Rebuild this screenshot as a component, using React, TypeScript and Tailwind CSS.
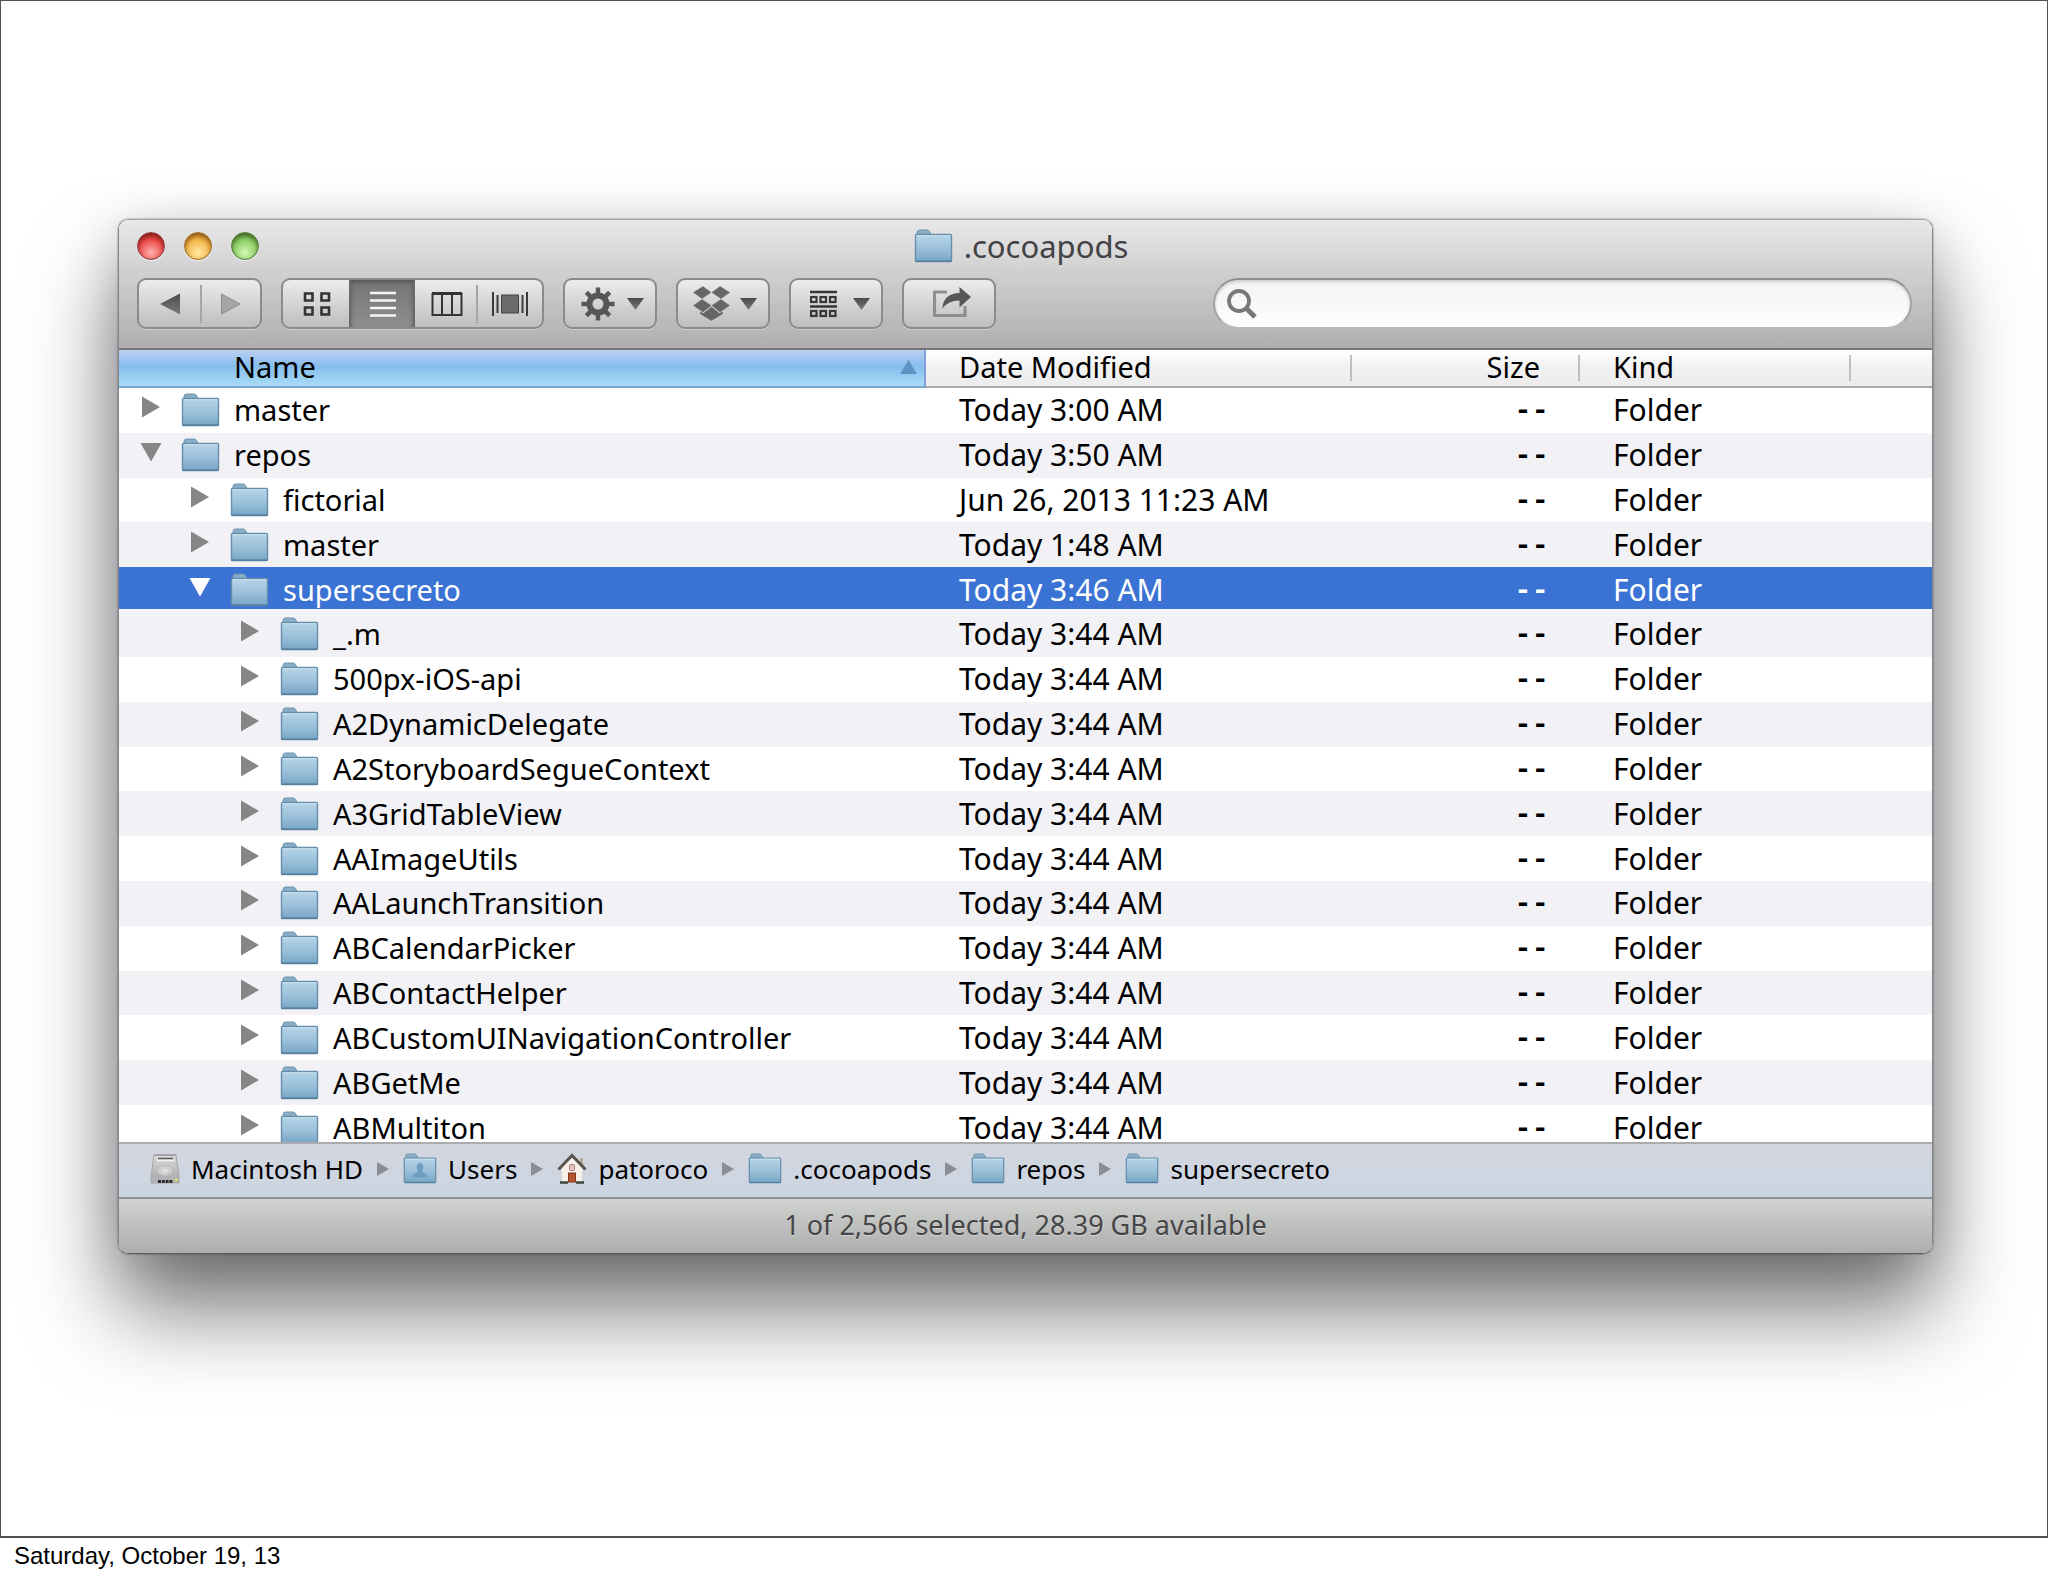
import React from "react";

type Entry = { name: string; level: 0 | 1 | 2; open?: boolean; selected?: boolean; date: string };

const LATE = "Today 3:44 AM";

const entries: Entry[] = [
  { name: "master", level: 0, date: "Today 3:00 AM" },
  { name: "repos", level: 0, open: true, date: "Today 3:50 AM" },
  { name: "fictorial", level: 1, date: "Jun 26, 2013 11:23 AM" },
  { name: "master", level: 1, date: "Today 1:48 AM" },
  { name: "supersecreto", level: 1, open: true, selected: true, date: "Today 3:46 AM" },
  { name: "_.m", level: 2, date: LATE },
  { name: "500px-iOS-api", level: 2, date: LATE },
  { name: "A2DynamicDelegate", level: 2, date: LATE },
  { name: "A2StoryboardSegueContext", level: 2, date: LATE },
  { name: "A3GridTableView", level: 2, date: LATE },
  { name: "AAImageUtils", level: 2, date: LATE },
  { name: "AALaunchTransition", level: 2, date: LATE },
  { name: "ABCalendarPicker", level: 2, date: LATE },
  { name: "ABContactHelper", level: 2, date: LATE },
  { name: "ABCustomUINavigationController", level: 2, date: LATE },
  { name: "ABGetMe", level: 2, date: LATE },
  { name: "ABMultiton", level: 2, date: LATE },
];

const indent = { 0: "pl-[21px]", 1: "pl-[70px]", 2: "pl-[120px]" };

function Gradients() {
  return (
    <svg className="absolute h-0 w-0" aria-hidden="true">
      <defs>
        <linearGradient id="folder" x1="0" y1="0" x2="0" y2="1">
          <stop offset="0" stopColor="#b5d4e8" />
          <stop offset="0.5" stopColor="#9dc1da" />
          <stop offset="1" stopColor="#77a6c6" />
        </linearGradient>
        <linearGradient id="glyph" x1="0" y1="0" x2="0" y2="1">
          <stop offset="0" stopColor="#4a4a4a" />
          <stop offset="1" stopColor="#7a7a7a" />
        </linearGradient>
        <linearGradient id="metal" x1="0" y1="0" x2="0" y2="1">
          <stop offset="0" stopColor="#dcdcdc" />
          <stop offset="1" stopColor="#a4a4a6" />
        </linearGradient>
      </defs>
    </svg>
  );
}

function Folder({ className = "h-[34px] w-[39px]", person = false }: { className?: string; person?: boolean }) {
  return (
    <svg viewBox="0 0 39 34" preserveAspectRatio="none" className={`${className} shrink-0`} aria-hidden="true">
      <path d="M3 6V3.5Q3 1 5.500 1H13Q15 1 15.800 3L17 5.500V10H3Z" fill="#8aaec6" stroke="#6c93ae" strokeWidth="1" />
      <rect x="1.500" y="5.500" width="36" height="27" rx="1" fill="url(#folder)" stroke="#648eac" strokeWidth="1.400" />
      <path d="M2.500 6.800H36.500" stroke="#cfe3f0" strokeWidth="1" />
      <path d="M1.500 32.300H37.500" stroke="#547f9d" strokeWidth="1.400" />
      {person && (
        <path d="M19.500 11a4 4.500 0 0 1 2.500 8q0 3 5.500 4.500v3.500h-16v-3.500q5.500-1.500 5.500-4.500a4 4.500 0 0 1 2.500-8Z" fill="#6d9dbf" />
      )}
    </svg>
  );
}

function Drive() {
  return (
    <svg viewBox="0 0 30 32" className="h-8 w-[30px] shrink-0" aria-hidden="true">
      <path d="M4 1.500H26L29 24V30H1V24Z" fill="url(#metal)" stroke="#a6a6a8" strokeWidth="1" />
      <path d="M4.500 2.500H25.500" stroke="#a0a0a2" strokeWidth="1" />
      <path d="M8 5.500H23" stroke="#5e5e60" strokeWidth="1.600" />
      <path d="M7 7.500H24" stroke="#f4f4f4" strokeWidth="1.600" />
      <ellipse cx="15" cy="17.500" rx="8" ry="5" fill="#cfcfd1" stroke="#bcbcbe" />
      <ellipse cx="15" cy="17.500" rx="3" ry="1.800" fill="#e2e2e2" />
      <rect x="1.500" y="24.500" width="27" height="5.500" fill="#b2b2b4" />
      <path d="M8 28.500H23" stroke="#2c2c2e" strokeWidth="3" strokeDasharray="3 0.800" />
      <rect x="25" y="25.500" width="2.500" height="2.500" fill="#e8e25a" />
    </svg>
  );
}

function Home() {
  return (
    <svg viewBox="0 0 30 32" className="h-8 w-[30px] shrink-0" aria-hidden="true">
      <path d="M23 5H26V13H23Z" fill="#b9a98f" />
      <path d="M5 14L15 4L25 14V29H5Z" fill="#f7f1ec" />
      <path d="M1.500 16.500L15 2.500L28.500 16.500" fill="none" stroke="#5b554e" strokeWidth="3" strokeLinejoin="miter" />
      <rect x="12.500" y="11.500" width="5" height="6" rx="1" fill="#e3c5bf" stroke="#a87a70" strokeWidth="1" />
      <rect x="11.500" y="20" width="7" height="9" fill="#b5532e" stroke="#7d3a20" strokeWidth="1" />
      <path d="M3 29.500H11M19 29.500H27" stroke="#3f4438" strokeWidth="2.400" />
    </svg>
  );
}

function Disclosure({ open, selected }: { open?: boolean; selected?: boolean }) {
  return (
    <button aria-label={open ? "Collapse" : "Expand"} className="mb-[6px] flex w-[22px] shrink-0 justify-center">
      <svg viewBox="0 0 22 22" className="h-[22px] w-[22px]" aria-hidden="true">
        <path d={open ? "M0.500 2H21.500L11 20.500Z" : "M2 0.500V21.500L20 11Z"} fill={selected ? "#ffffff" : "#868686"} />
      </svg>
    </button>
  );
}

function Light({ label, tone }: { label: string; tone: string }) {
  return (
    <button
      aria-label={label}
      className={`h-7 w-7 rounded-full border ${tone} shadow-[inset_0_3px_4px_rgba(40,20,0,0.45),0_1px_1px_rgba(255,255,255,0.7)]`}
    />
  );
}

const buttonFace =
  "flex h-[51px] shrink-0 items-center overflow-hidden rounded-[9px] border-2 border-[#8b8b8c] bg-linear-to-b from-[#ececec] to-[#bfbdbf] shadow-[0_1px_0_rgba(255,255,255,0.35)]";

function Caret() {
  return (
    <svg viewBox="0 0 17 12" className="h-3 w-[17px]" aria-hidden="true">
      <path d="M0 0H17L8.500 12Z" fill="url(#glyph)" />
    </svg>
  );
}

function Gear() {
  return (
    <svg viewBox="-17 -17 34 34" className="h-[34px] w-[34px]" aria-hidden="true">
      <g fill="none" stroke="#575757">
        <circle r="8.500" strokeWidth="6" />
        {[0, 45, 90, 135, 180, 225, 270, 315].map((a) => (
          <path key={a} d="M0 -10V-16.500" strokeWidth="4.400" transform={`rotate(${a})`} />
        ))}
      </g>
    </svg>
  );
}

function Boxes() {
  return (
    <svg viewBox="0 0 37 35" className="h-[35px] w-[37px]" aria-hidden="true">
      <g fill="#666667" stroke="#666667" strokeWidth="0.500">
        <path d="M10 0.500L18 6.500L9 12.500L0.500 6.500Z" />
        <path d="M27 0.500L19 6.500L28 12.500L36.500 6.500Z" />
        <path d="M9 13.500L18 19.500L10 26L0.500 19.500Z" />
        <path d="M28 13.500L19 19.500L27 26L36.500 19.500Z" />
        <path d="M18.500 21L26.500 27.500L29.500 26V28L18.500 34.500L7.500 28V26L10.500 27.500Z" />
      </g>
    </svg>
  );
}

function Arrange() {
  return (
    <svg viewBox="0 0 27 28" className="h-7 w-[27px]" aria-hidden="true">
      <g stroke="#373737" strokeWidth="2.200" fill="none">
        <path d="M0 2H27M0 16.500H27" strokeWidth="2.600" />
        {[1, 10.5, 20].map((x) => (
          <g key={x}>
            <rect x={x} y="7" width="5.500" height="5" />
            <rect x={x} y="21" width="5.500" height="5" />
          </g>
        ))}
      </g>
    </svg>
  );
}

function Share() {
  return (
    <svg viewBox="0 0 38 32" className="h-8 w-[38px]" aria-hidden="true">
      <path d="M14 6H1.500V29.500H32V20" fill="none" stroke="#8f8f90" strokeWidth="3.200" />
      <path d="M9.500 22.500Q10 7.500 26.500 7V1L38 11L26.500 21.500V14.500Q15 14.500 9.500 22.500Z" fill="#575758" />
    </svg>
  );
}

function Toolbar() {
  return (
    <div className="flex items-center gap-[19px] pt-[13px] pr-[20px] pb-[19px] pl-[18px]">
      <div className={`${buttonFace} w-[125px]`}>
        <button aria-label="Back" className="flex h-full flex-1 items-center justify-center border-0 pl-[2px]">
          <svg viewBox="0 0 20 22" className="h-[22px] w-5" aria-hidden="true">
            <path d="M20 0.500V21.500L0 11Z" fill="url(#glyph)" />
          </svg>
        </button>
        <span className="h-[38px] w-[2px] bg-[#a6a6a7]" />
        <button aria-label="Forward" className="flex h-full flex-1 items-center justify-center">
          <svg viewBox="0 0 20 22" className="h-[22px] w-5" aria-hidden="true">
            <path d="M0.500 1V21L19 11Z" fill="#a5a5a6" stroke="#8b8b8c" />
          </svg>
        </button>
      </div>

      <div className={`${buttonFace} w-[263px]`} role="group" aria-label="View">
        <button aria-label="Icon view" className="flex h-full w-[66px] items-center justify-center pl-[2px]">
          <svg viewBox="0 0 28 26" className="h-[26px] w-7" aria-hidden="true">
            <path
              d="M2 2.500H9.500V9.500H2ZM18.500 2.500H26V9.500H18.500ZM2 16.500H9.500V23.500H2ZM18.500 16.500H26V23.500H18.500Z"
              fill="none"
              stroke="#333"
              strokeWidth="2.600"
            />
          </svg>
        </button>
        <button
          aria-label="List view"
          aria-pressed="true"
          className="flex h-full w-[66px] items-center justify-center border-x-2 border-[#6a6a6b] bg-linear-to-b from-[#757576] to-[#8f8e8f] pl-[2px] shadow-[inset_0_2px_4px_rgba(0,0,0,0.3)]"
        >
          <svg viewBox="0 0 28 26" className="h-[26px] w-7" aria-hidden="true">
            <path d="M1 2H27M1 9.500H27M1 17H27M1 24.500H27" stroke="#f5f5f5" strokeWidth="2.400" />
          </svg>
        </button>
        <button aria-label="Column view" className="flex h-full flex-1 items-center justify-center pl-[2px]">
          <svg viewBox="0 0 32 26" className="h-[26px] w-8" aria-hidden="true">
            <path d="M1 2.500H31" stroke="#333" strokeWidth="3" />
            <path d="M1.500 2V24H30.500V2M11 2V24M21 2V24" fill="none" stroke="#333" strokeWidth="2" />
          </svg>
        </button>
        <span className="h-[38px] w-[2px] bg-[#a6a6a7]" />
        <button aria-label="Cover view" className="flex h-full w-[64px] items-center justify-center">
          <svg viewBox="0 0 36 26" className="h-[26px] w-9" aria-hidden="true">
            <path d="M1 1V25M35 1V25" stroke="#3a3a3a" strokeWidth="2" />
            <path d="M5.500 4V22M30.500 4V22" stroke="#3a3a3a" strokeWidth="2" />
            <rect x="9.500" y="4" width="17" height="18" fill="#6a6a6b" stroke="#444" />
          </svg>
        </button>
      </div>

      <button aria-label="Action" className={`${buttonFace} w-[94px] gap-[12px] pl-[16px]`}>
        <Gear />
        <Caret />
      </button>
      <button aria-label="Dropbox" className={`${buttonFace} w-[94px] gap-[10px] pl-[15px]`}>
        <Boxes />
        <Caret />
      </button>
      <button aria-label="Arrange" className={`${buttonFace} w-[94px] gap-[16px] pl-[19px]`}>
        <Arrange />
        <Caret />
      </button>
      <button aria-label="Share" className={`${buttonFace} w-[94px] pb-1 pl-[29px]`}>
        <Share />
      </button>

      <label className="ml-[198px] flex h-[51px] flex-1 items-center rounded-full border-2 border-t-[#8f8f90] border-r-[#a3a3a4] border-b-[#b9b9ba] border-l-[#a3a3a4] bg-linear-to-b from-[#f3f2f4] to-[#fefdff] pl-3 shadow-[inset_0_2px_3px_rgba(0,0,0,0.15)]">
        <svg viewBox="0 0 30 30" className="h-[30px] w-[30px] shrink-0" aria-hidden="true">
          <circle cx="12" cy="12" r="10" fill="none" stroke="#78787a" strokeWidth="3.800" />
          <path d="M19 19L28 28" stroke="#78787a" strokeWidth="5" />
        </svg>
        <input type="search" aria-label="Search" className="h-full min-w-0 flex-1 bg-transparent px-2 text-[29px] outline-none" />
      </label>
    </div>
  );
}

function Tick() {
  return <span className="absolute top-[5px] right-0 h-[26px] w-[2px] bg-[#bfbfc1]" />;
}

const headCell =
  "relative border-b-2 border-[#a9a9ab] bg-linear-to-b from-white via-[#f2f2f2] via-45% to-[#ececec] p-0 pb-[2px] align-middle font-normal";

function FileList() {
  return (
    <div className="h-[792px] overflow-hidden bg-white text-[30px] leading-[36px] text-black">
      <table className="h-[800px] w-full table-fixed border-separate border-spacing-0 text-left">
        <colgroup>
          <col />
          <col className="w-[426px]" />
          <col className="w-[228px]" />
          <col className="w-[271px]" />
          <col className="w-[81px]" />
        </colgroup>
        <thead className="text-[29px] leading-[34px]">
          <tr className="h-[38px]">
            <th className="relative border-r-2 border-b-2 border-r-[#7f9fe0] border-b-[#7ba6cb] bg-linear-to-b from-[#bcd0f4] via-[#86bdec] via-45% to-[#a9dcf6] p-0 pb-[2px] pl-[115px] font-normal">
              Name
              <svg viewBox="0 0 17 14" className="absolute top-[10px] right-[7px] h-[14px] w-[17px]" aria-hidden="true">
                <path d="M8.500 0L17 14H0Z" fill="#5e93c5" />
              </svg>
            </th>
            <th className={`${headCell} pl-[33px]`}>
              Date Modified
              <Tick />
            </th>
            <th className={`${headCell} pr-[40px] text-right`}>
              Size
              <Tick />
            </th>
            <th className={`${headCell} pl-[33px]`}>
              Kind
              <Tick />
            </th>
            <th className={headCell} aria-label="More" />
          </tr>
        </thead>
        <tbody className="[&_td]:p-0">
          {entries.map((e, i) => (
            <tr
              key={i}
              className={
                e.selected
                  ? "bg-[#3a73d3] text-white [&_td]:shadow-[inset_0_-3px_0_#f3f5fb]"
                  : i % 2
                    ? "bg-[#f2f2f6]"
                    : "bg-white"
              }
            >
              <td>
                <div className={`flex items-center ${indent[e.level]}`}>
                  <Disclosure open={e.open} selected={e.selected} />
                  <span className="mr-[14px] ml-[19px] flex">
                    <Folder />
                  </span>
                  <span className="text-[29px] whitespace-nowrap">{e.name}</span>
                </div>
              </td>
              <td>
                <span className="pl-[33px]">{e.date}</span>
              </td>
              <td className="text-right">
                <span className="pr-[31px] font-['Liberation_Mono',monospace] text-[29px] font-bold">--</span>
              </td>
              <td>
                <span className="pl-[33px]">Folder</span>
              </td>
              <td />
            </tr>
          ))}
        </tbody>
      </table>
    </div>
  );
}

function Crumb({ children, icon, last = false }: { children: string; icon: React.ReactNode; last?: boolean }) {
  return (
    <li className="flex items-center">
      {icon}
      <a href="#" className="ml-[11px]">
        {children}
      </a>
      {!last && (
        <svg viewBox="0 0 12 14" className="mx-[14px] h-[14px] w-3" aria-hidden="true">
          <path d="M0 0L12 7L0 14Z" fill="#8b8d95" />
        </svg>
      )}
    </li>
  );
}

function PathBar() {
  const small = "h-[31px] w-[34px]";
  return (
    <nav aria-label="Path" className="border-t-2 border-[#a9abae] bg-linear-to-b from-[#d3d6de] to-[#cbd5e2] pb-[4px]">
      <ol className="flex h-[49px] items-center pl-[31px] text-[26px] leading-[36px] whitespace-nowrap text-black">
        <Crumb icon={<Drive />}>Macintosh HD</Crumb>
        <Crumb icon={<Folder className={small} person />}>Users</Crumb>
        <Crumb icon={<Home />}>patoroco</Crumb>
        <Crumb icon={<Folder className={small} />}>.cocoapods</Crumb>
        <Crumb icon={<Folder className={small} />}>repos</Crumb>
        <Crumb icon={<Folder className={small} />} last>
          supersecreto
        </Crumb>
      </ol>
    </nav>
  );
}

export default function App() {
  return (
    <div className="flex min-h-screen flex-col bg-white">
      <Gradients />
      <main className="overflow-hidden border border-b-2 border-[#525254] pt-[218px] pr-[114px] pb-[282px] pl-[117px]">
        <section
          aria-label=".cocoapods"
          className="overflow-hidden rounded-[10px] border border-t-[#a3a3a4] border-r-[#858586] border-b-[#5b5a5c] border-l-[#858586] font-['Noto_Sans','Open_Sans',sans-serif] shadow-[0_56px_88px_rgba(8,4,10,0.54),0_10px_54px_rgba(0,0,0,0.16),0_0_2px_rgba(0,0,0,0.5)]"
        >
          <header className="border-b-2 border-[#767577] bg-linear-to-b from-[#e8e8e8] to-[#b0aeb0]">
            <div className="grid grid-cols-[1fr_auto_1fr] items-center pt-[7px]">
              <div className="flex gap-[19px] pl-[18px]">
                <Light label="Close" tone="border-[#8f3a3a] bg-[radial-gradient(circle_at_50%_75%,#ffb3ad,#e8413f_60%,#b3201f)]" />
                <Light label="Minimize" tone="border-[#a06a20] bg-[radial-gradient(circle_at_50%_75%,#ffe9a3,#f3b140_60%,#c97b16)]" />
                <Light label="Zoom" tone="border-[#4f7c38] bg-[radial-gradient(circle_at_50%_75%,#d4f7b0,#82c95c_60%,#4c8f2e)]" />
              </div>
              <h1 className="flex items-center gap-[11px] pr-[9px] text-[31px] leading-[38px] text-[#434345]">
                <Folder />
                .cocoapods
              </h1>
            </div>
            <Toolbar />
          </header>
          <FileList />
          <PathBar />
          <footer className="border-t-2 border-[#8d9096] bg-linear-to-b from-[#d0d3cf] to-[#adadae] pb-[3px] text-center text-[27px] leading-[51px] text-[#454547] [text-shadow:0_1px_0_rgba(255,255,255,0.4)]">
            1 of 2,566 selected, 28.39 GB available
          </footer>
        </section>
      </main>
      <p className="pl-[14px] font-['Liberation_Sans',Arial,sans-serif] text-[24px] leading-[36px] text-black">
        Saturday, October 19, 13
      </p>
    </div>
  );
}
